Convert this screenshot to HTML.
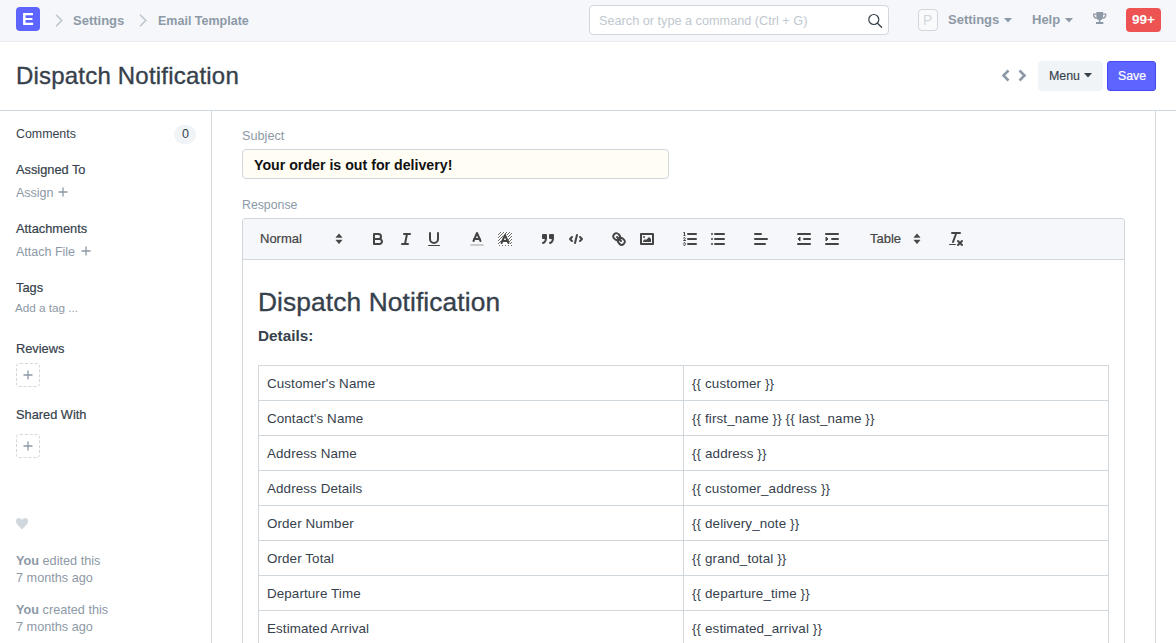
<!DOCTYPE html>
<html><head><meta charset="utf-8">
<style>
*{box-sizing:border-box;margin:0;padding:0}
html,body{width:1176px;height:643px;overflow:hidden;background:#fff;font-family:"Liberation Sans",sans-serif;color:#36414c}
.a{position:absolute}
.t{position:absolute;white-space:nowrap;line-height:1}
.hd{font-size:12.8px;color:#36414c;-webkit-text-stroke:0.2px #36414c}
svg{position:absolute;overflow:visible}
</style></head><body>

<!-- NAVBAR -->
<div class="a" style="left:0;top:0;width:1176px;height:42px;background:#f5f7fa;border-bottom:1px solid #e9edf0"></div>
<div class="a" style="left:16px;top:7px;width:24px;height:24px;background:#5e64ff;border-radius:4px"></div>
<svg style="left:16px;top:7px" width="24" height="24" viewBox="0 0 24 24"><path d="M7.1 6.1 H17 V8.3 H9.5 V11 H16.4 V13.1 H9.5 V15.8 H17.1 V18 H7.1 Z" fill="#fff"/></svg>
<svg style="left:55px;top:14px" width="8" height="13" viewBox="0 0 8 13"><path d="M1 0.8 L6.8 6.5 L1 12.2" fill="none" stroke="#bcc5cd" stroke-width="1.5"/></svg>
<div class="t" style="left:73px;top:14px;font-size:13px;font-weight:700;color:#8d99a6">Settings</div>
<svg style="left:139px;top:14px" width="8" height="13" viewBox="0 0 8 13"><path d="M1 0.8 L6.8 6.5 L1 12.2" fill="none" stroke="#bcc5cd" stroke-width="1.5"/></svg>
<div class="t" style="left:158px;top:15px;font-size:12.5px;font-weight:700;color:#8d99a6">Email Template</div>

<div class="a" style="left:589px;top:5px;width:300px;height:30px;background:#fff;border:1px solid #d1d8dd;border-radius:4px"></div>
<div class="t" style="left:599px;top:15px;font-size:12.7px;color:#c0c8cf">Search or type a command (Ctrl + G)</div>
<svg style="left:867px;top:13px" width="16" height="16" viewBox="0 0 16 16"><circle cx="6.8" cy="6.5" r="5" fill="none" stroke="#36414c" stroke-width="1.2"/><path d="M10.5 10.2 L14.6 14.3" stroke="#36414c" stroke-width="1.3" stroke-linecap="round"/></svg>

<div class="a" style="left:918px;top:9px;width:20px;height:22px;border:1px solid #d1d8dd;border-radius:4px;background:#f9fafb"></div>
<div class="t" style="left:923px;top:13px;font-size:14px;color:#d1d8dd">P</div>
<div class="t" style="left:948px;top:13px;font-size:13px;font-weight:700;color:#8d99a6">Settings</div>
<svg style="left:1004px;top:18px" width="8" height="5" viewBox="0 0 8 5"><path d="M0 0 H8 L4 4.5Z" fill="#8d99a6"/></svg>
<div class="t" style="left:1032px;top:13px;font-size:13px;font-weight:700;color:#8d99a6">Help</div>
<svg style="left:1065px;top:18px" width="8" height="5" viewBox="0 0 8 5"><path d="M0 0 H8 L4 4.5Z" fill="#8d99a6"/></svg>
<svg style="left:1092px;top:11px" width="15" height="14" viewBox="0 0 15 14"><path d="M4.3 1 H11.1 V5.5 Q11.1 8.5 8.4 9.2 V11 H11.3 V13 H4 V11 H6.9 V9.2 Q4.3 8.5 4.3 5.5 Z" fill="#8d99a6"/><path d="M4.3 3.2 H1.7 Q1.4 6.6 4.8 7.4 M11.1 3.2 H13.7 Q14 6.6 10.6 7.4" fill="none" stroke="#8d99a6" stroke-width="1.3"/></svg>
<div class="a" style="left:1126px;top:8px;width:35px;height:24px;background:#ed5353;border-radius:4px"></div>
<div class="t" style="left:1132px;top:13px;font-size:13.5px;font-weight:700;color:#fff">99+</div>

<!-- TITLE ROW -->
<div class="t" style="left:16px;top:64px;font-size:24px;letter-spacing:0.2px;color:#36414c;-webkit-text-stroke:0.35px #36414c">Dispatch Notification</div>
<svg style="left:1001px;top:69px" width="10" height="13" viewBox="0 0 10 13"><path d="M7.5 1.5 L2.5 6.5 L7.5 11.5" fill="none" stroke="#8d99a6" stroke-width="2.6"/></svg>
<svg style="left:1017px;top:69px" width="10" height="13" viewBox="0 0 10 13"><path d="M2.5 1.5 L7.5 6.5 L2.5 11.5" fill="none" stroke="#8d99a6" stroke-width="2.6"/></svg>
<div class="a" style="left:1038px;top:61px;width:65px;height:30px;background:#f0f4f7;border-radius:4px"></div>
<div class="t" style="left:1049px;top:70px;font-size:12.4px;color:#36414c;-webkit-text-stroke:0.15px #36414c">Menu</div>
<svg style="left:1084px;top:73px" width="8" height="5" viewBox="0 0 8 5"><path d="M0 0 H8 L4 4.5Z" fill="#36414c"/></svg>
<div class="a" style="left:1107px;top:61px;width:49px;height:30px;background:#5e64ff;border:1px solid #4449f2;border-radius:3px"></div>
<div class="t" style="left:1118px;top:70px;font-size:12.3px;color:#fff;-webkit-text-stroke:0.2px #fff">Save</div>

<div class="a" style="left:0;top:110px;width:1176px;height:1px;background:#d1d8dd"></div>
<div class="a" style="left:211px;top:110px;width:1px;height:533px;background:#d1d8dd"></div>
<div class="a" style="left:1155px;top:110px;width:1px;height:533px;background:#d1d8dd"></div>



<!-- FORM -->
<div class="t" style="left:242px;top:130px;font-size:12.7px;color:#8d99a6">Subject</div>
<div class="a" style="left:242px;top:149px;width:427px;height:30px;background:#fffdf4;border:1px solid #d1d8dd;border-radius:4px"></div>
<div class="t" style="left:254px;top:158px;font-size:14.2px;font-weight:700;color:#111">Your order is out for delivery!</div>
<div class="t" style="left:242px;top:199px;font-size:12.3px;color:#8d99a6">Response</div>
<div class="a" style="left:242px;top:218px;width:883px;height:425px;border:1px solid #d1d8dd;border-bottom:none;border-radius:4px 4px 0 0;background:#fff"></div>
<div class="a" style="left:243px;top:219px;width:881px;height:40px;background:#f5f7fa;border-radius:3px 3px 0 0"></div>
<div class="a" style="left:242px;top:259px;width:883px;height:1px;background:#d1d8dd"></div>
<div class="t" style="left:260px;top:232px;font-size:13px;color:#444;-webkit-text-stroke:0.2px #444">Normal</div>
<svg style="left:330px;top:230px" width="18" height="18" viewBox="0 0 18 18"><polygon fill="#444" stroke="#444" stroke-width="0.5" stroke-linejoin="round" points="5.9 7.4 9 3.8 12.1 7.4"/><polygon fill="#444" stroke="#444" stroke-width="0.5" stroke-linejoin="round" points="5.9 10 9 13.8 12.1 10"/></svg>
<div class="t" style="left:870px;top:232px;font-size:13px;color:#444;-webkit-text-stroke:0.2px #444">Table</div>
<svg style="left:908px;top:230px" width="18" height="18" viewBox="0 0 18 18"><polygon fill="#444" stroke="#444" stroke-width="0.5" stroke-linejoin="round" points="5.9 7.4 9 3.8 12.1 7.4"/><polygon fill="#444" stroke="#444" stroke-width="0.5" stroke-linejoin="round" points="5.9 10 9 13.8 12.1 10"/></svg>
<svg style="left:369px;top:230px" width="18" height="18" viewBox="0 0 18 18"><path stroke="#444" stroke-width="2" stroke-linecap="round" stroke-linejoin="round" fill="none" d="M5,4H9.5A2.5,2.5,0,0,1,12,6.5v0A2.5,2.5,0,0,1,9.5,9H5A0,0,0,0,1,5,9V4A0,0,0,0,1,5,4Z"/><path stroke="#444" stroke-width="2" stroke-linecap="round" stroke-linejoin="round" fill="none" d="M5,9h5.5A2.5,2.5,0,0,1,13,11.5v0A2.5,2.5,0,0,1,10.5,14H5a0,0,0,0,1,0,0V9A0,0,0,0,1,5,9Z"/></svg>
<svg style="left:397px;top:230px" width="18" height="18" viewBox="0 0 18 18"><line stroke="#444" stroke-width="2" stroke-linecap="round" stroke-linejoin="round" fill="none" x1="7" x2="13" y1="4" y2="4"/><line stroke="#444" stroke-width="2" stroke-linecap="round" stroke-linejoin="round" fill="none" x1="5" x2="11" y1="14" y2="14"/><line stroke="#444" stroke-width="2" stroke-linecap="round" stroke-linejoin="round" fill="none" x1="8" x2="10" y1="14" y2="4"/></svg>
<svg style="left:425px;top:230px" width="18" height="18" viewBox="0 0 18 18"><path stroke="#444" stroke-width="2" stroke-linecap="round" stroke-linejoin="round" fill="none" d="M5,3V9a4.012,4.012,0,0,0,4,4H9a4.012,4.012,0,0,0,4-4V3"/><rect fill="#444" height="1" rx="0.5" ry="0.5" width="12" x="3" y="15"/></svg>
<svg style="left:468px;top:230px" width="18" height="18" viewBox="0 0 18 18"><line stroke="#ccc" stroke-width="2" stroke-linecap="round" x1="3" x2="15" y1="15" y2="15"/><polyline stroke="#444" stroke-width="2" stroke-linecap="round" stroke-linejoin="round" fill="none" points="5.5 11 9 3 12.5 11"/><line stroke="#444" stroke-width="2" stroke-linecap="round" stroke-linejoin="round" fill="none" x1="11.63" x2="6.38" y1="9" y2="9"/></svg>
<svg style="left:496px;top:230px" width="18" height="18" viewBox="0 0 18 18"><rect x="2" y="2" width="14" height="14" fill="#fff"/><g fill="#444" fill-opacity="0.8"><rect x="4" y="2" width="1" height="1"/><rect x="7" y="2" width="1" height="1"/><rect x="10" y="2" width="1" height="1"/><rect x="13" y="2" width="1" height="1"/><rect x="3" y="3" width="1" height="1"/><rect x="6" y="3" width="1" height="1"/><rect x="9" y="3" width="1" height="1"/><rect x="12" y="3" width="1" height="1"/><rect x="15" y="3" width="1" height="1"/><rect x="2" y="4" width="1" height="1"/><rect x="5" y="4" width="1" height="1"/><rect x="11" y="4" width="1" height="1"/><rect x="14" y="4" width="1" height="1"/><rect x="4" y="5" width="1" height="1"/><rect x="13" y="5" width="1" height="1"/><rect x="3" y="6" width="1" height="1"/><rect x="6" y="6" width="1" height="1"/><rect x="12" y="6" width="1" height="1"/><rect x="15" y="6" width="1" height="1"/><rect x="2" y="7" width="1" height="1"/><rect x="5" y="7" width="1" height="1"/><rect x="14" y="7" width="1" height="1"/><rect x="4" y="8" width="1" height="1"/><rect x="13" y="8" width="1" height="1"/><rect x="3" y="9" width="1" height="1"/><rect x="12" y="9" width="1" height="1"/><rect x="15" y="9" width="1" height="1"/><rect x="2" y="10" width="1" height="1"/><rect x="14" y="10" width="1" height="1"/><rect x="4" y="11" width="1" height="1"/><rect x="13" y="11" width="1" height="1"/><rect x="3" y="12" width="1" height="1"/><rect x="15" y="12" width="1" height="1"/><rect x="2" y="13" width="1" height="1"/><rect x="14" y="13" width="1" height="1"/><rect x="3" y="15" width="1" height="1"/><rect x="6" y="15" width="1" height="1"/><rect x="9" y="15" width="1" height="1"/><rect x="12" y="15" width="1" height="1"/><rect x="15" y="15" width="1" height="1"/></g><polyline stroke="#444" stroke-width="2" stroke-linecap="round" stroke-linejoin="round" fill="none" points="5.5 13 9 5 12.5 13"/><line stroke="#444" stroke-width="2" stroke-linecap="round" stroke-linejoin="round" fill="none" x1="11.63" x2="6.38" y1="11" y2="11"/></svg>
<svg style="left:539px;top:230px" width="18" height="18" viewBox="0 0 18 18"><rect fill="#444" stroke="#444" stroke-width="2" stroke-linejoin="round" height="3" width="3" x="4" y="5"/><rect fill="#444" stroke="#444" stroke-width="2" stroke-linejoin="round" height="3" width="3" x="11" y="5"/><path stroke="#444" stroke-width="2" stroke-linecap="round" stroke-linejoin="round" fill="none" d="M7,8c0,4.031-3,5-3,5"/><path stroke="#444" stroke-width="2" stroke-linecap="round" stroke-linejoin="round" fill="none" d="M14,8c0,4.031-3,5-3,5"/></svg>
<svg style="left:567px;top:230px" width="18" height="18" viewBox="0 0 18 18"><polyline stroke="#444" stroke-width="2" stroke-linecap="round" stroke-linejoin="round" fill="none" points="5 7 3 9 5 11"/><polyline stroke="#444" stroke-width="2" stroke-linecap="round" stroke-linejoin="round" fill="none" points="13 7 15 9 13 11"/><line stroke="#444" stroke-width="2" stroke-linecap="round" stroke-linejoin="round" fill="none" x1="10" x2="8" y1="5" y2="13"/></svg>
<svg style="left:610px;top:230px" width="18" height="18" viewBox="0 0 18 18"><line stroke="#444" stroke-width="2" stroke-linecap="round" stroke-linejoin="round" fill="none" x1="7" x2="11" y1="7" y2="11"/><path stroke="#444" stroke-width="2" stroke-linecap="round" stroke-linejoin="round" fill="none" d="M8.9,4.577a3.476,3.476,0,0,1,.36,4.679A3.476,3.476,0,0,1,4.577,8.9C3.185,7.5,2.035,6.4,4.217,4.217S7.5,3.185,8.9,4.577Z"/><path stroke="#444" stroke-width="2" stroke-linecap="round" stroke-linejoin="round" fill="none" d="M13.423,9.1a3.476,3.476,0,0,0-4.679-.36,3.476,3.476,0,0,0,.36,4.679c1.392,1.392,2.5,2.542,4.679.36S14.815,10.5,13.423,9.1Z"/></svg>
<svg style="left:638px;top:230px" width="18" height="18" viewBox="0 0 18 18"><rect stroke="#444" stroke-width="2" stroke-linecap="round" stroke-linejoin="round" fill="none" height="10" width="12" x="3" y="4"/><circle fill="#444" cx="6" cy="7" r="1"/><polyline fill="#444" points="5 12 5 11 7 9 8 10 11 7 13 9 13 12 5 12"/></svg>
<svg style="left:681px;top:230px" width="18" height="18" viewBox="0 0 18 18"><line stroke="#444" stroke-width="2" stroke-linecap="round" stroke-linejoin="round" fill="none" x1="7" x2="15" y1="4" y2="4"/><line stroke="#444" stroke-width="2" stroke-linecap="round" stroke-linejoin="round" fill="none" x1="7" x2="15" y1="9" y2="9"/><line stroke="#444" stroke-width="2" stroke-linecap="round" stroke-linejoin="round" fill="none" x1="7" x2="15" y1="14" y2="14"/><line stroke="#444" stroke-width="1" x1="2.5" x2="4.5" y1="5.5" y2="5.5"/><path fill="#444" d="M3.5,6A0.5,0.5,0,0,1,3,5.5V3.085l-0.276.138A0.5,0.5,0,0,1,2.053,3c-0.124-.247-0.023-0.324.224-0.447l1-.5A0.5,0.5,0,0,1,4,2.5v3A0.5,0.5,0,0,1,3.5,6Z"/><path fill="none" stroke="#444" stroke-width="1" stroke-linecap="round" stroke-linejoin="round" d="M4.5,10.5h-2c0-.234,1.85-1.076,1.85-2.234A0.959,0.959,0,0,0,2.5,8.156"/><path fill="none" stroke="#444" stroke-width="1" stroke-linecap="round" stroke-linejoin="round" d="M2.5,14.846a0.959,0.959,0,0,0,1.85-.109A0.7,0.7,0,0,0,3.75,14a0.688,0.688,0,0,0,.6-0.736,0.959,0.959,0,0,0-1.85-.109"/></svg>
<svg style="left:709px;top:230px" width="18" height="18" viewBox="0 0 18 18"><line stroke="#444" stroke-width="2" stroke-linecap="round" stroke-linejoin="round" fill="none" x1="6" x2="15" y1="4" y2="4"/><line stroke="#444" stroke-width="2" stroke-linecap="round" stroke-linejoin="round" fill="none" x1="6" x2="15" y1="9" y2="9"/><line stroke="#444" stroke-width="2" stroke-linecap="round" stroke-linejoin="round" fill="none" x1="6" x2="15" y1="14" y2="14"/><line stroke="#444" stroke-width="2" stroke-linecap="round" stroke-linejoin="round" fill="none" x1="3" x2="3" y1="4" y2="4"/><line stroke="#444" stroke-width="2" stroke-linecap="round" stroke-linejoin="round" fill="none" x1="3" x2="3" y1="9" y2="9"/><line stroke="#444" stroke-width="2" stroke-linecap="round" stroke-linejoin="round" fill="none" x1="3" x2="3" y1="14" y2="14"/></svg>
<svg style="left:752px;top:230px" width="18" height="18" viewBox="0 0 18 18"><line stroke="#444" stroke-width="2" stroke-linecap="round" stroke-linejoin="round" fill="none" x1="3" x2="15" y1="9" y2="9"/><line stroke="#444" stroke-width="2" stroke-linecap="round" stroke-linejoin="round" fill="none" x1="3" x2="13" y1="14" y2="14"/><line stroke="#444" stroke-width="2" stroke-linecap="round" stroke-linejoin="round" fill="none" x1="3" x2="9" y1="4" y2="4"/></svg>
<svg style="left:795px;top:230px" width="18" height="18" viewBox="0 0 18 18"><line stroke="#444" stroke-width="2" stroke-linecap="round" stroke-linejoin="round" fill="none" x1="3" x2="15" y1="14" y2="14"/><line stroke="#444" stroke-width="2" stroke-linecap="round" stroke-linejoin="round" fill="none" x1="3" x2="15" y1="4" y2="4"/><line stroke="#444" stroke-width="2" stroke-linecap="round" stroke-linejoin="round" fill="none" x1="9" x2="15" y1="9" y2="9"/><polyline fill="#444" stroke="#444" stroke-width="1" stroke-linejoin="round" points="5 7 5 11 3 9 5 7"/></svg>
<svg style="left:823px;top:230px" width="18" height="18" viewBox="0 0 18 18"><line stroke="#444" stroke-width="2" stroke-linecap="round" stroke-linejoin="round" fill="none" x1="3" x2="15" y1="14" y2="14"/><line stroke="#444" stroke-width="2" stroke-linecap="round" stroke-linejoin="round" fill="none" x1="3" x2="15" y1="4" y2="4"/><line stroke="#444" stroke-width="2" stroke-linecap="round" stroke-linejoin="round" fill="none" x1="9" x2="15" y1="9" y2="9"/><polyline fill="#444" stroke="#444" stroke-width="1" stroke-linejoin="round" points="3 7 3 11 5 9 3 7"/></svg>
<svg style="left:947px;top:230px" width="18" height="18" viewBox="0 0 18 18"><line stroke="#444" stroke-width="2" stroke-linecap="round" stroke-linejoin="round" fill="none" x1="5" x2="13" y1="3" y2="3"/><line stroke="#444" stroke-width="2" stroke-linecap="round" stroke-linejoin="round" fill="none" x1="6" x2="9.35" y1="12" y2="3"/><line stroke="#444" stroke-width="2" stroke-linecap="round" stroke-linejoin="round" fill="none" x1="11" x2="15" y1="11" y2="15"/><line stroke="#444" stroke-width="2" stroke-linecap="round" stroke-linejoin="round" fill="none" x1="15" x2="11" y1="11" y2="15"/><rect fill="#444" height="1" rx="0.5" ry="0.5" width="7" x="2" y="14"/></svg>

<div class="t" style="left:258px;top:289px;font-size:26.3px;letter-spacing:0.12px;color:#36414c;-webkit-text-stroke:0.35px #36414c">Dispatch Notification</div>
<div class="t" style="left:258px;top:328px;font-size:15.3px;font-weight:700;color:#36414c">Details:</div>
<div class="a" style="left:258px;top:365px;width:851px;height:300px;border:1px solid #d1d8dd;border-bottom:none"></div>
<div class="a" style="left:683px;top:365px;width:1px;height:300px;background:#d1d8dd"></div>
<div class="t" style="left:267px;top:377px;font-size:13.4px;letter-spacing:0.1px;color:#36414c">Customer's Name</div>
<div class="t" style="left:692px;top:377px;font-size:13.4px;letter-spacing:0.12px;color:#36414c">{{ customer }}</div>
<div class="a" style="left:258px;top:400px;width:851px;height:1px;background:#d1d8dd"></div>
<div class="t" style="left:267px;top:412px;font-size:13.4px;letter-spacing:0.1px;color:#36414c">Contact's Name</div>
<div class="t" style="left:692px;top:412px;font-size:13.4px;letter-spacing:0.12px;color:#36414c">{{ first_name }} {{ last_name }}</div>
<div class="a" style="left:258px;top:435px;width:851px;height:1px;background:#d1d8dd"></div>
<div class="t" style="left:267px;top:447px;font-size:13.4px;letter-spacing:0.1px;color:#36414c">Address Name</div>
<div class="t" style="left:692px;top:447px;font-size:13.4px;letter-spacing:0.12px;color:#36414c">{{ address }}</div>
<div class="a" style="left:258px;top:470px;width:851px;height:1px;background:#d1d8dd"></div>
<div class="t" style="left:267px;top:482px;font-size:13.4px;letter-spacing:0.1px;color:#36414c">Address Details</div>
<div class="t" style="left:692px;top:482px;font-size:13.4px;letter-spacing:0.12px;color:#36414c">{{ customer_address }}</div>
<div class="a" style="left:258px;top:505px;width:851px;height:1px;background:#d1d8dd"></div>
<div class="t" style="left:267px;top:517px;font-size:13.4px;letter-spacing:0.1px;color:#36414c">Order Number</div>
<div class="t" style="left:692px;top:517px;font-size:13.4px;letter-spacing:0.12px;color:#36414c">{{ delivery_note }}</div>
<div class="a" style="left:258px;top:540px;width:851px;height:1px;background:#d1d8dd"></div>
<div class="t" style="left:267px;top:552px;font-size:13.4px;letter-spacing:0.1px;color:#36414c">Order Total</div>
<div class="t" style="left:692px;top:552px;font-size:13.4px;letter-spacing:0.12px;color:#36414c">{{ grand_total }}</div>
<div class="a" style="left:258px;top:575px;width:851px;height:1px;background:#d1d8dd"></div>
<div class="t" style="left:267px;top:587px;font-size:13.4px;letter-spacing:0.1px;color:#36414c">Departure Time</div>
<div class="t" style="left:692px;top:587px;font-size:13.4px;letter-spacing:0.12px;color:#36414c">{{ departure_time }}</div>
<div class="a" style="left:258px;top:610px;width:851px;height:1px;background:#d1d8dd"></div>
<div class="t" style="left:267px;top:622px;font-size:13.4px;letter-spacing:0.1px;color:#36414c">Estimated Arrival</div>
<div class="t" style="left:692px;top:622px;font-size:13.4px;letter-spacing:0.12px;color:#36414c">{{ estimated_arrival }}</div>

<!-- SIDEBAR -->
<div class="t" style="left:16px;top:128px;font-size:12.4px;color:#36414c">Comments</div>
<div class="a" style="left:174px;top:125px;width:22px;height:19px;background:#f0f4f7;border-radius:10px"></div>
<div class="t" style="left:182px;top:128px;font-size:12.5px;color:#36414c">0</div>
<div class="t hd" style="left:16px;top:164px">Assigned To</div>
<div class="t" style="left:16px;top:187px;font-size:12.5px;color:#8d99a6">Assign</div>
<svg style="left:58px;top:187px" width="10" height="10" viewBox="0 0 10 10"><path d="M5 0.5V9.5M0.5 5H9.5" stroke="#8d99a6" stroke-width="1.3"/></svg>
<div class="t hd" style="left:16px;top:223px">Attachments</div>
<div class="t" style="left:16px;top:246px;font-size:12.5px;color:#8d99a6">Attach File</div>
<svg style="left:81px;top:246px" width="10" height="10" viewBox="0 0 10 10"><path d="M5 0.5V9.5M0.5 5H9.5" stroke="#8d99a6" stroke-width="1.3"/></svg>
<div class="t hd" style="left:16px;top:282px">Tags</div>
<div class="t" style="left:15px;top:302px;font-size:11.7px;color:#8d99a6">Add a tag ...</div>
<div class="t hd" style="left:16px;top:343px">Reviews</div>
<div class="a" style="left:16px;top:363px;width:24px;height:24px;border:1px dashed #d1d8dd;border-radius:4px"></div>
<svg style="left:23px;top:370px" width="10" height="10" viewBox="0 0 10 10"><path d="M5 0.5V9.5M0.5 5H9.5" stroke="#8d99a6" stroke-width="1.3"/></svg>
<div class="t hd" style="left:16px;top:409px">Shared With</div>
<div class="a" style="left:16px;top:434px;width:24px;height:24px;border:1px dashed #d1d8dd;border-radius:4px"></div>
<svg style="left:23px;top:441px" width="10" height="10" viewBox="0 0 10 10"><path d="M5 0.5V9.5M0.5 5H9.5" stroke="#8d99a6" stroke-width="1.3"/></svg>
<svg style="left:16.4px;top:518px" width="12" height="12" viewBox="0 0 12 12"><path d="M6 11.6 L1.3 6.6 Q0 5.2 0 3.3 Q0 0 3 0 Q4.8 0 6 1.9 Q7.2 0 9 0 Q12 0 12 3.3 Q12 5.2 10.7 6.6Z" fill="#d1d8dd"/></svg>
<div class="t" style="left:16px;top:555px;font-size:12.7px;color:#8d99a6"><b>You</b> edited this</div>
<div class="t" style="left:16px;top:572px;font-size:12.7px;color:#8d99a6">7 months ago</div>
<div class="t" style="left:16px;top:604px;font-size:12.7px;color:#8d99a6"><b>You</b> created this</div>
<div class="t" style="left:16px;top:621px;font-size:12.7px;color:#8d99a6">7 months ago</div>
</body></html>
